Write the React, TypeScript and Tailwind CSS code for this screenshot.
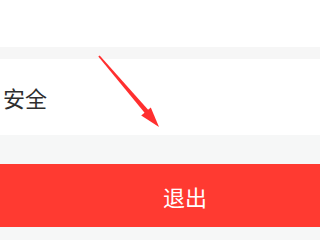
import React from "react";

export default function App() {
  const font = { fontFamily: '"Noto Sans CJK SC", "Noto Sans", sans-serif' };
  return (
    <div className="relative w-[320px] h-[240px] overflow-hidden bg-[#f6f7f7]" style={font}>
      <div className="h-[47px] bg-white" />
      <div className="h-[12px] bg-[#f6f6f6]" />
      <div className="h-[76px] bg-white flex items-center pl-[3px]">
        <span className="text-[22px] leading-none text-[#2e2e2e]">安全</span>
      </div>
      <div className="h-[29px] bg-[#f6f7f7]" />
      <div className="h-[63px] bg-[#ff3a31] flex items-center pl-[163px]">
        <span className="text-[22px] leading-none text-white">退出</span>
      </div>
      <svg className="absolute left-0 top-0" width="320" height="240" viewBox="0 0 320 240">
        <polygon points="98.3,56.6 99.7,55.4 148.8,110.4 145.2,113.6" fill="#ff2f2f" />
        <polygon points="159,127 141.2,115.6 150.8,107.4" fill="#ff2f2f" />
      </svg>
    </div>
  );
}
